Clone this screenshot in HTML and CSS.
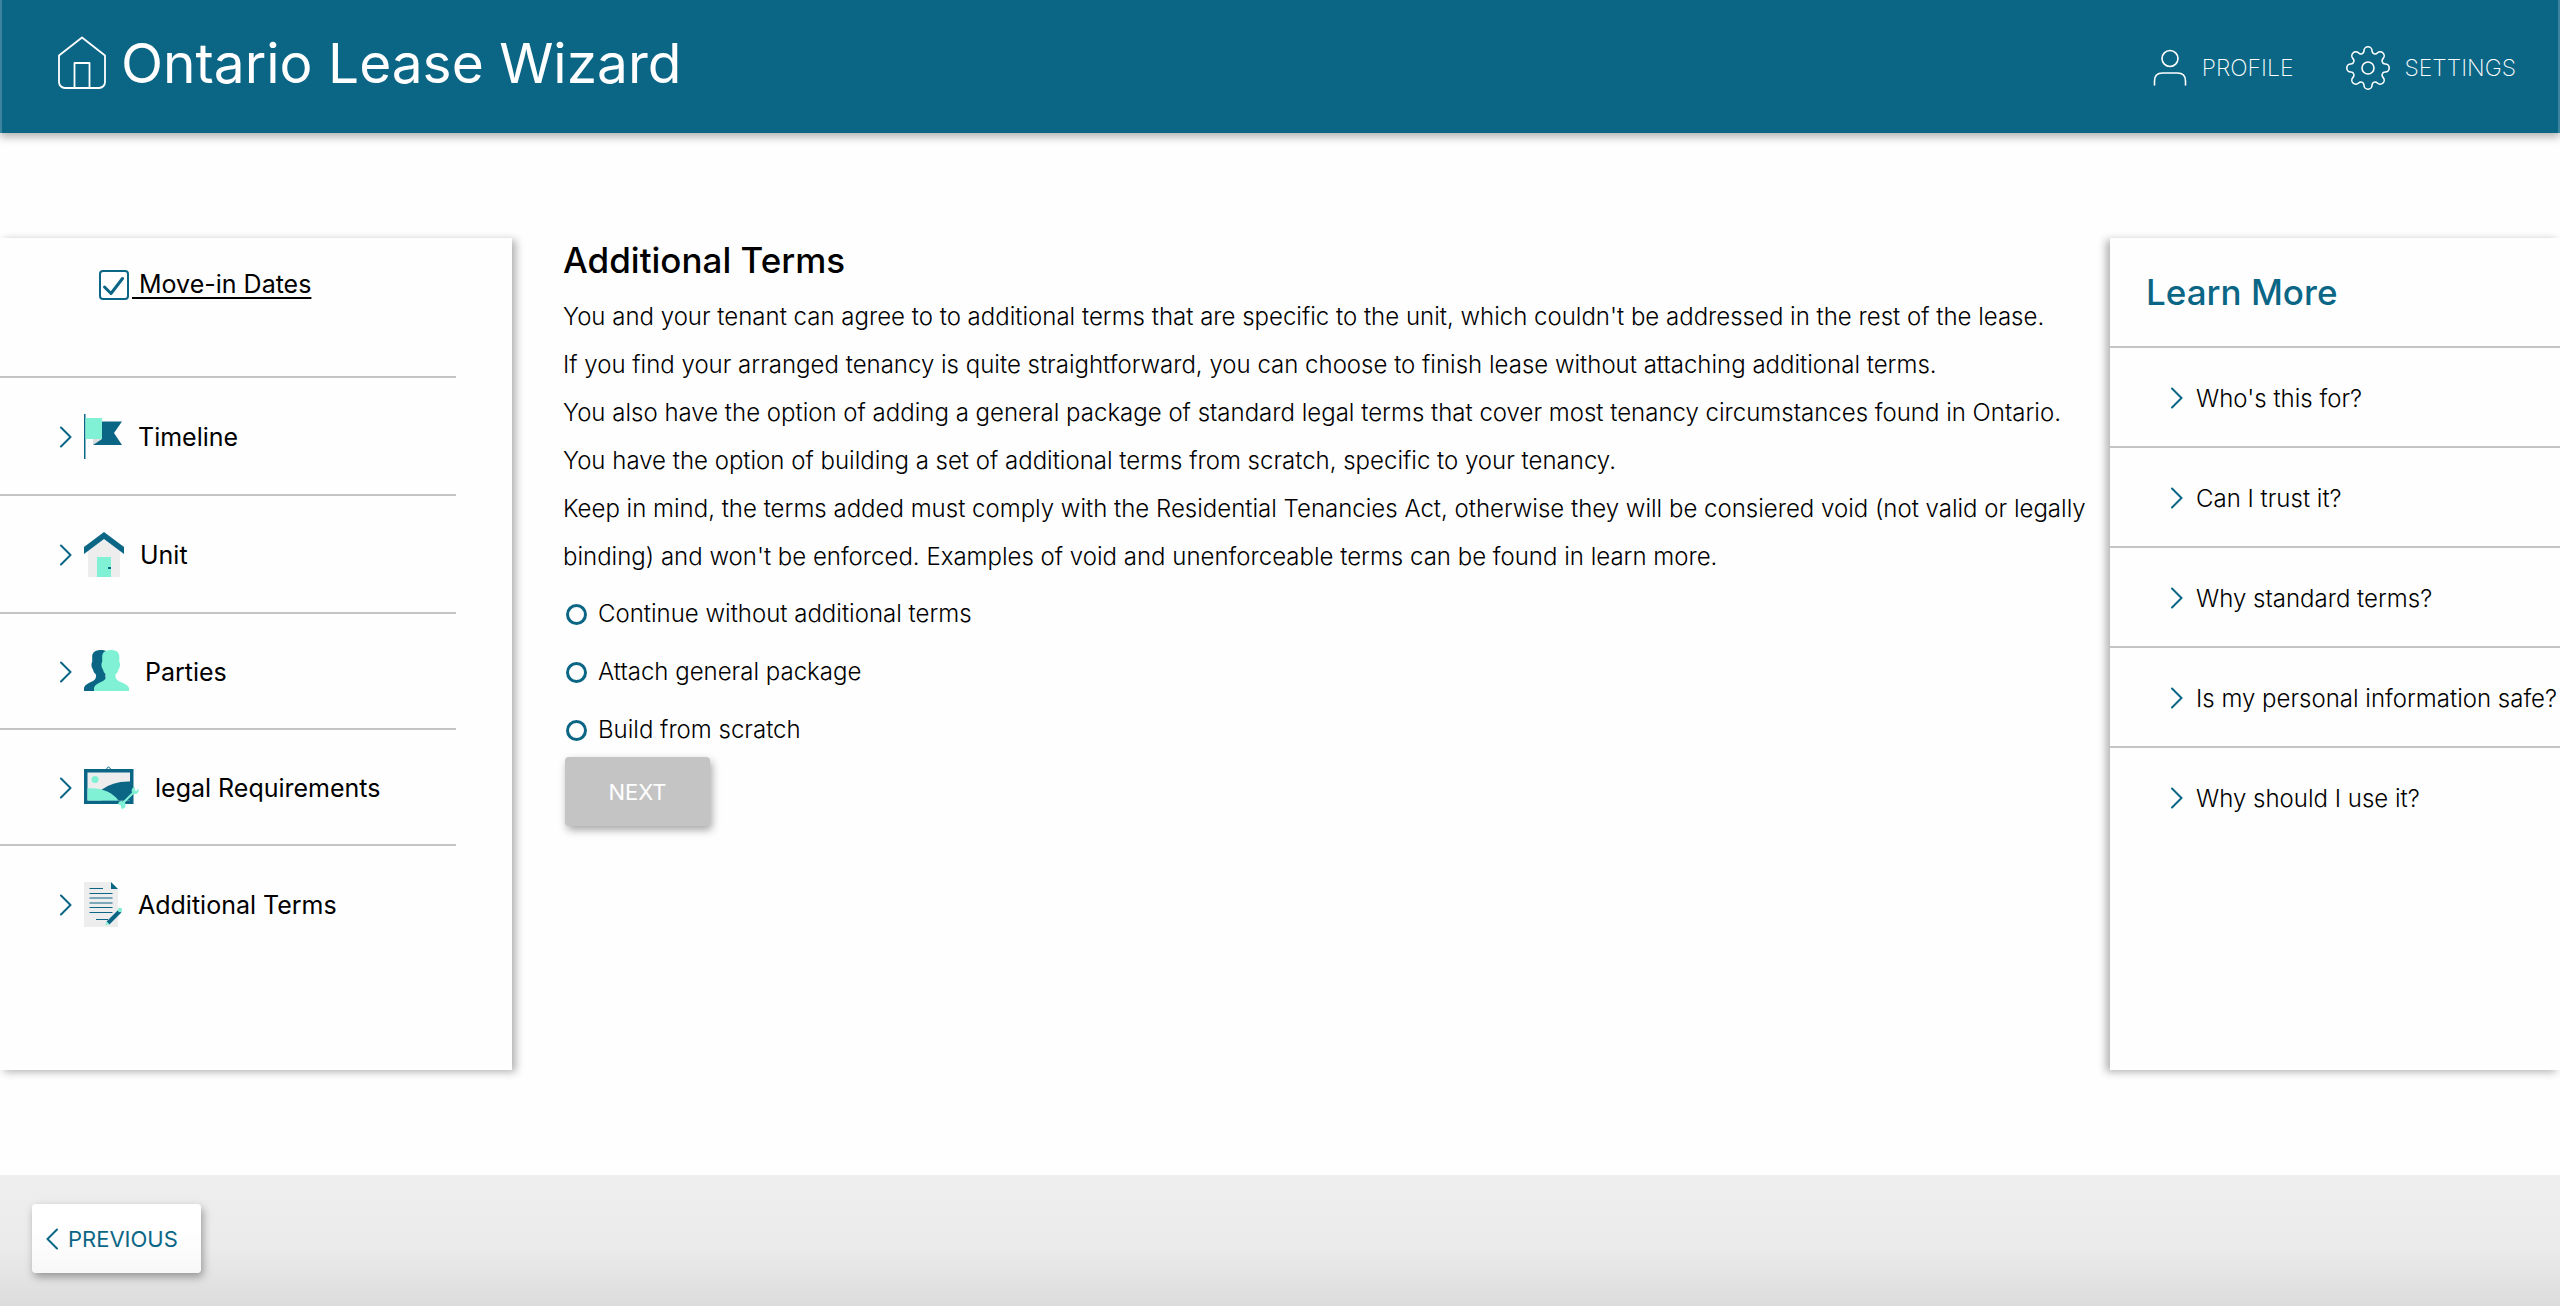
FILE: index.html
```html
<!DOCTYPE html>
<html lang="en">
<head>
<meta charset="utf-8">
<meta name="viewport" content="width=device-width, initial-scale=1">
<title>Ontario Lease Wizard</title>
<link rel="stylesheet" href="styles.css">
</head>
<body>
<svg class="defs" aria-hidden="true">
  <symbol id="chevron" viewBox="0 0 12 22"><path d="M1 1.500 10.500 11 1 20.500" fill="none" stroke="#0b6686" stroke-width="2" stroke-linecap="round" stroke-linejoin="round"/></symbol>
  <symbol id="chevron-left" viewBox="0 0 12 22"><path d="M11 1.500 1.500 11 11 20.500" fill="none" stroke="#0b6686" stroke-width="2" stroke-linecap="round" stroke-linejoin="round"/></symbol>
</svg>

<header class="topbar">
  <a class="brand" href="#">
    <svg class="brand-icon" width="50" height="54" viewBox="0 0 50 54" fill="none" stroke="#fff" stroke-width="1.800" stroke-linejoin="round">
      <path d="M25 1.500 48 19.500V46a6 6 0 0 1-6 6H8a6 6 0 0 1-6-6V19.500Z"/>
      <path d="M17.500 52V27h15v25"/>
    </svg>
    <span>Ontario Lease Wizard</span>
  </a>
  <nav class="account">
    <a href="#">
      <svg width="34" height="38" viewBox="0 0 34 38" fill="none" stroke="#fff" stroke-width="1.600" stroke-linecap="round">
        <circle cx="17" cy="9.500" r="8"/>
        <path d="M1.500 36V32q0-8 8-8h15q8 0 8 8v4"/>
      </svg>
      <span>PROFILE</span>
    </a>
    <a href="#">
      <svg width="44" height="44" viewBox="-22 -22 44 44" fill="none" stroke="#fff" stroke-width="1.600">
        <circle r="6"/>
        <path id="tooth" d="M-5.900-14.300C-4.500-14.900-4-16-4-17.200a4 4 0 0 1 8 0C4-16 4.500-14.900 5.900-14.300"/>
        <use href="#tooth" transform="rotate(45)"/>
        <use href="#tooth" transform="rotate(90)"/>
        <use href="#tooth" transform="rotate(135)"/>
        <use href="#tooth" transform="rotate(180)"/>
        <use href="#tooth" transform="rotate(225)"/>
        <use href="#tooth" transform="rotate(270)"/>
        <use href="#tooth" transform="rotate(315)"/>
      </svg>
      <span>SETTINGS</span>
    </a>
  </nav>
</header>

<div class="workspace">
  <aside class="steps">
    <div class="substep">
      <span class="tick">
        <input type="checkbox" id="move-in" checked>
        <svg width="30" height="30" viewBox="0 0 30 30"><path d="M5.500 17 12 23.500 23.500 8.500" fill="none" stroke="#0b6686" stroke-width="3" stroke-linecap="round" stroke-linejoin="round"/></svg>
      </span>
      <label for="move-in">&nbsp;Move-in Dates</label>
    </div>
    <button class="step" type="button">
      <svg width="12" height="22"><use href="#chevron"/></svg>
      <svg width="38" height="45" viewBox="0 0 38 45">
        <path d="M0 0h1.500v45H0z" fill="#0b6686"/>
        <path d="M9 25h9v1L9 31z" fill="#ddd"/>
        <path d="M18 7.500h20L30 19l8 12H9l9-6z" fill="#0b6686"/>
        <path d="M1.500 4H18v21H1.500z" fill="#80f1d5"/>
      </svg>
      <span>Timeline</span>
    </button>
    <button class="step" type="button">
      <svg width="12" height="22"><use href="#chevron"/></svg>
      <svg width="40" height="45" viewBox="0 0 40 45">
        <path d="M20 7l16 12v26H4V19z" fill="#ededed"/>
        <path d="M20 0l20 15v7L20 7 0 22v-7z" fill="#0b6686"/>
        <path d="M13 25h14v20H13z" fill="#80f1d5"/>
        <path d="M24 35h3v2h-3z" fill="#0b6686"/>
      </svg>
      <span>Unit</span>
    </button>
    <button class="step" type="button">
      <svg width="12" height="22"><use href="#chevron"/></svg>
      <svg width="45" height="43" viewBox="0 0 45 43">
        <path d="M17 0c5 0 8 2 8.300 6v6c1.500 2 .5 6-.8 7.500-.5 2.500-1.500 3.500-3 5-.5 3 .5 5 3 6.500 4 2 9.500 4 9.500 7.500V41H0v-2.500c0-3.500 5-5.500 9-7.500 2.500-1.500 3.500-3.500 3-6.500-1.500-1.500-2.500-2.500-3-5-1.300-1.500-2.300-5.500-.8-7.500V6C8.500 2 12 0 17 0z" fill="#0b6686"/>
        <path d="M27 0c5 0 8 2 8.300 6v6c1.500 2 .5 6-.8 7.500-.5 2.500-1.500 3.500-3 5-.5 3 .5 5 3 6.500 4 2 10.500 4 10.500 7.500V41H10v-2.500c0-3.500 5-5.500 9-7.500 2.500-1.500 3.500-3.500 3-6.500-1.500-1.500-2.500-2.500-3-5-1.300-1.500-2.300-5.500-.8-7.500V6C18.500 2 22 0 27 0z" fill="#80f1d5"/>
      </svg>
      <span>Parties</span>
    </button>
    <button class="step" type="button">
      <svg width="12" height="22"><use href="#chevron"/></svg>
      <svg width="55" height="43" viewBox="0 0 55 43">
        <path d="M22 3.500 24.500.7 27 3.500" fill="none" stroke="#0b6686"/>
        <path d="M0 3h49.500v35H0z" fill="#0b6686"/>
        <path d="M3.500 6.500H46v28H3.500z" fill="#ededed"/>
        <circle cx="11" cy="13.500" r="3.500" fill="#80f1d5"/>
        <path d="M17 24q12-9 29-8.500v19H17z" fill="#0b6686"/>
        <path d="M3.500 22.500c14-1 25 4 31 12h-31z" fill="#80f1d5"/>
        <path d="M38 38 50 26" stroke="#80f1d5" stroke-width="2.200"/>
        <path d="M54 22.500a3.500 3.500 0 1 1-3.200-1.500v3.500l2 .5zM34 38.500a3.800 3.800 0 1 1 3.200 4.200l-.2-3.200-1.800-.8z" fill="#80f1d5"/>
      </svg>
      <span>legal Requirements</span>
    </button>
    <button class="step" type="button">
      <svg width="12" height="22"><use href="#chevron"/></svg>
      <svg width="38" height="45" viewBox="0 0 38 45">
        <path d="M0 0h27l7 7v38H0z" fill="#ededed"/>
        <path d="M27 0v7h7z" fill="#0b6686"/>
        <path d="M5.500 6.500H19M5.500 11.500h23M5.500 16h23M5.500 21h23M5.500 25.500h23M5.500 30.500h23M12 37.500h12" stroke="#0b6686" stroke-width="1.200"/>
        <path d="M24 41 36 29" stroke="#0b6686" stroke-width="4"/>
        <circle cx="36" cy="28" r="2.200" fill="#80f1d5"/>
        <path d="m22.500 39.500 3 3-4 .5z" fill="#80f1d5"/>
      </svg>
      <span>Additional Terms</span>
    </button>
  </aside>

  <main class="content">
    <h1>Additional Terms</h1>
    <p>You and your tenant can agree to to additional terms that are specific to the unit, which couldn't be addressed in the rest of the lease.</p>
    <p>If you find your arranged tenancy is quite straightforward, you can choose to finish lease without attaching additional terms.</p>
    <p>You also have the option of adding a general package of standard legal terms that cover most tenancy circumstances found in Ontario.</p>
    <p>You have the option of building a set of additional terms from scratch, specific to your tenancy.</p>
    <p>Keep in mind, the terms added must comply with the Residential Tenancies Act, otherwise they will be consiered void (not valid or legally binding) and won't be enforced. Examples of void and unenforceable terms can be found in learn more.</p>
    <form class="choices">
      <label><input type="radio" name="terms">Continue without additional terms</label>
      <label><input type="radio" name="terms">Attach general package</label>
      <label><input type="radio" name="terms">Build from scratch</label>
      <button class="next" type="button">NEXT</button>
    </form>
  </main>

  <aside class="learn">
    <h2>Learn More</h2>
    <button class="question" type="button"><svg width="12" height="22"><use href="#chevron"/></svg>Who's this for?</button>
    <button class="question" type="button"><svg width="12" height="22"><use href="#chevron"/></svg>Can I trust it?</button>
    <button class="question" type="button"><svg width="12" height="22"><use href="#chevron"/></svg>Why standard terms?</button>
    <button class="question" type="button"><svg width="12" height="22"><use href="#chevron"/></svg>Is my personal information safe?</button>
    <button class="question" type="button"><svg width="12" height="22"><use href="#chevron"/></svg>Why should I use it?</button>
  </aside>
</div>

<footer class="bottombar">
  <button class="previous" type="button"><svg width="12" height="22"><use href="#chevron-left"/></svg>PREVIOUS</button>
</footer>
</body>
</html>
```

FILE: styles.css
```css
* { box-sizing: border-box; }

body {
  margin: 0;
  min-height: 100vh;
  display: flex;
  flex-direction: column;
  background: #fefefe;
  color: #000;
  font-family: Inter, "Liberation Sans", sans-serif;
  font-size: 24px;
  overflow-x: hidden;
}

button {
  font: inherit;
  color: inherit;
  border: 0;
  background: none;
  text-align: left;
  cursor: pointer;
}

svg { flex: none; display: block; }

.defs { position: absolute; width: 0; height: 0; }

.topbar {
  display: flex;
  justify-content: space-between;
  align-items: center;
  height: 133px;
  padding: 0 42px 0 55px;
  background: #0b6686;
  border: solid #3d849e;
  border-width: 0 2px;
  box-shadow: 0 4px 8px rgba(0, 0, 0, .3);
}

.topbar a { color: #fff; text-decoration: none; }

.brand {
  display: flex;
  align-items: center;
  gap: 14px;
  padding-bottom: 8px;
  font-size: 55px;
  line-height: 60px;
}

.account { display: flex; gap: 52px; padding-top: 2px; font-size: 23px; font-weight: 200; }
.account a { display: flex; align-items: center; gap: 15px; }

.workspace {
  flex: 1;
  display: grid;
  grid-template-columns: 512px minmax(0, 1fr) 450px;
  padding: 105px 0;
}

.steps {
  background: #fefefe;
  box-shadow: 4px 2px 8px rgba(0, 0, 0, .3);
  font-size: 25px;
}

.substep {
  display: flex;
  align-items: flex-start;
  margin-right: 56px;
  height: 140px;
  padding: 32px 0 0 99px;
  border-bottom: 2px solid #c4c4c4;
}

.substep label {
  padding-left: 3px;
  line-height: 28px;
  text-decoration: underline;
  text-underline-offset: 4px;
}

.tick { display: grid; }
.tick > * { grid-area: 1 / 1; }
.tick svg { pointer-events: none; }
.tick input {
  appearance: none;
  width: 30px;
  height: 30px;
  margin: 0;
  border: 2px solid #0b6686;
  border-radius: 4px;
}

.step {
  display: flex;
  align-items: center;
  gap: 12px;
  width: calc(100% - 56px);
  padding: 36px 0 35px 60px;
}
.step:not(:last-child) { border-bottom: 2px solid #c4c4c4; }
.step span { margin-left: 4px; }

.content { padding-left: 51px; }

h1, h2 { margin: 0; font-weight: 500; font-size: 35px; line-height: 44px; }
h1 { margin-bottom: 11px; }

p { margin: 0; line-height: 48px; font-weight: 300; }

.choices {
  display: flex;
  flex-direction: column;
  align-items: flex-start;
  gap: 4px;
  padding-top: 6px;
}
.choices label {
  display: flex;
  align-items: center;
  gap: 11px;
  padding-left: 3px;
  line-height: 54px;
  font-weight: 300;
}
.choices input {
  appearance: none;
  width: 21px;
  height: 21px;
  margin: 0;
  border: 3px solid #0b6686;
  border-radius: 50%;
}

.next, .previous {
  height: 69px;
  border-radius: 4px;
  font-size: 22px;
  box-shadow: 2px 4px 8px rgba(0, 0, 0, .35);
}
.next {
  width: 145px;
  margin: -4px 0 0 2px;
  padding: 0;
  text-align: center;
  color: #fff;
  background: #c4c4c4;
}

.learn {
  background: #fefefe;
  box-shadow: -4px 2px 8px rgba(0, 0, 0, .3);
}
.learn h2 {
  padding: 32px 0 32px 36px;
  color: #0b6686;
}
.question {
  display: flex;
  align-items: center;
  gap: 13px;
  width: 100%;
  height: 100px;
  padding: 2px 0 0 61px;
  border-top: 2px solid #c4c4c4;
  font-weight: 300;
  white-space: nowrap;
}

.bottombar {
  height: 131px;
  padding: 29px 32px;
  background: linear-gradient(#eee, #ebebeb 55%, #dcdcdc);
}
.previous {
  display: flex;
  align-items: center;
  gap: 10px;
  width: 169px;
  padding: 0 0 0 14px;
  color: #0b6686;
  background: linear-gradient(#fff 30%, #f8f8f8);
}
```
